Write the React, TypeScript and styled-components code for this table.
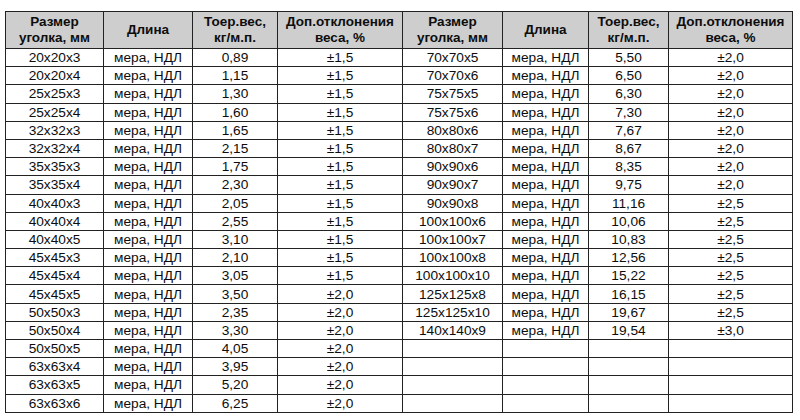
import styled, { createGlobalStyle } from 'styled-components';

const GlobalStyle = createGlobalStyle`
  body {
    margin: 0;
    background: #ffffff;
    font-family: "Liberation Sans", Arial, sans-serif;
    color: #0d0d0d;
  }
`;

const Page = styled.div`
  padding: 11px 0 0 5px;
`;

const Table = styled.table`
  border-collapse: collapse;
  table-layout: fixed;
  width: 787px;
  font-size: 13.7px;
`;

const HeadCell = styled.th`
  height: 36px;
  padding: 0 2px;
  background: #cecece;
  border: 1px solid #222;
  font-size: 13.5px;
  font-weight: bold;
  line-height: 16px;
  text-align: center;
  vertical-align: middle;
`;

const Cell = styled.td`
  height: 17.2px;
  padding: 0 2px;
  border: 1px solid #222;
  line-height: 15px;
  text-align: center;
  white-space: nowrap;
`;

const columns = [98, 89, 85, 125, 100, 86, 80, 124];

type Row = [string, string, string];

const left: Row[] = [
  ['20x20x3', '0,89', '±1,5'],
  ['20x20x4', '1,15', '±1,5'],
  ['25x25x3', '1,30', '±1,5'],
  ['25x25x4', '1,60', '±1,5'],
  ['32x32x3', '1,65', '±1,5'],
  ['32x32x4', '2,15', '±1,5'],
  ['35x35x3', '1,75', '±1,5'],
  ['35x35x4', '2,30', '±1,5'],
  ['40x40x3', '2,05', '±1,5'],
  ['40x40x4', '2,55', '±1,5'],
  ['40x40x5', '3,10', '±1,5'],
  ['45x45x3', '2,10', '±1,5'],
  ['45x45x4', '3,05', '±1,5'],
  ['45x45x5', '3,50', '±2,0'],
  ['50x50x3', '2,35', '±2,0'],
  ['50x50x4', '3,30', '±2,0'],
  ['50x50x5', '4,05', '±2,0'],
  ['63x63x4', '3,95', '±2,0'],
  ['63x63x5', '5,20', '±2,0'],
  ['63x63x6', '6,25', '±2,0'],
];

const right: Row[] = [
  ['70x70x5', '5,50', '±2,0'],
  ['70x70x6', '6,50', '±2,0'],
  ['75x75x5', '6,30', '±2,0'],
  ['75x75x6', '7,30', '±2,0'],
  ['80x80x6', '7,67', '±2,0'],
  ['80x80x7', '8,67', '±2,0'],
  ['90x90x6', '8,35', '±2,0'],
  ['90x90x7', '9,75', '±2,0'],
  ['90x90x8', '11,16', '±2,5'],
  ['100x100x6', '10,06', '±2,5'],
  ['100x100x7', '10,83', '±2,5'],
  ['100x100x8', '12,56', '±2,5'],
  ['100x100x10', '15,22', '±2,5'],
  ['125x125x8', '16,15', '±2,5'],
  ['125x125x10', '19,67', '±2,5'],
  ['140x140x9', '19,54', '±3,0'],
];

const headers = [
  ['Размер', 'уголка, мм'],
  ['Длина'],
  ['Тоер.вес,', 'кг/м.п.'],
  ['Доп.отклонения', 'веса, %'],
];

const RowCells = ({ row }: { row?: Row }) =>
  row ? (
    <>
      <Cell>{row[0]}</Cell>
      <Cell>мера, НДЛ</Cell>
      <Cell>{row[1]}</Cell>
      <Cell>{row[2]}</Cell>
    </>
  ) : (
    <>
      <Cell />
      <Cell />
      <Cell />
      <Cell />
    </>
  );

const App: React.FC = () => {
  return (
    <Page>
      <GlobalStyle />
      <Table>
        <colgroup>
          {columns.map((w, i) => (
            <col key={i} style={{ width: w }} />
          ))}
        </colgroup>
        <thead>
          <tr>
            {[...headers, ...headers].map((lines, i) => (
              <HeadCell key={i}>
                {lines.map((line, j) => (
                  <div key={j}>{line}</div>
                ))}
              </HeadCell>
            ))}
          </tr>
        </thead>
        <tbody>
          {left.map((row, i) => (
            <tr key={i}>
              <RowCells row={row} />
              <RowCells row={right[i]} />
            </tr>
          ))}
        </tbody>
      </Table>
    </Page>
  );
};

export default App;
